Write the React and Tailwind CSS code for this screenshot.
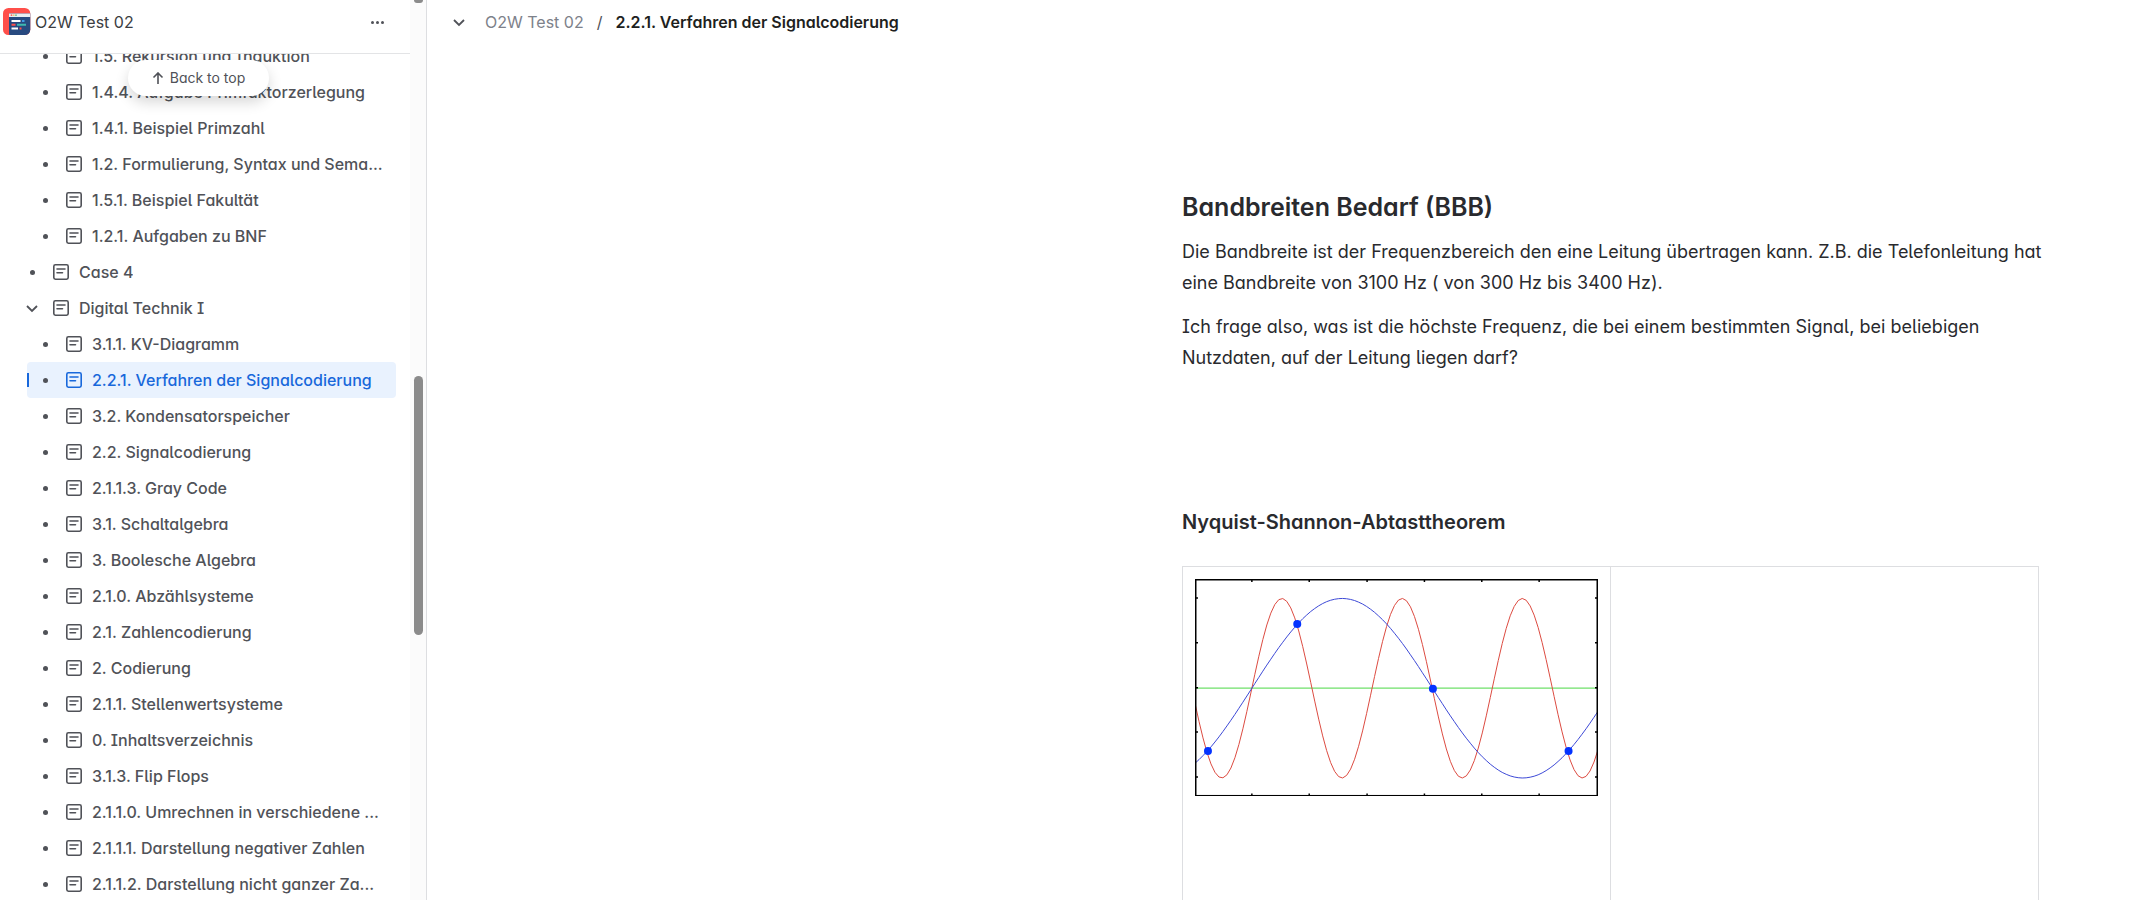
const SPACE_NAME = 'O2W Test 02';

const items = [
  { label: '1.5. Rekursion und Induktion', level: 2 },
  { label: '1.4.4. Aufgabe Primfaktorzerlegung', level: 2 },
  { label: '1.4.1. Beispiel Primzahl', level: 2 },
  { label: '1.2. Formulierung, Syntax und Sema...', level: 2 },
  { label: '1.5.1. Beispiel Fakultät', level: 2 },
  { label: '1.2.1. Aufgaben zu BNF', level: 2 },
  { label: 'Case 4', level: 1 },
  { label: 'Digital Technik I', level: 1, open: true },
  { label: '3.1.1. KV-Diagramm', level: 2 },
  { label: '2.2.1. Verfahren der Signalcodierung', level: 2, active: true },
  { label: '3.2. Kondensatorspeicher', level: 2 },
  { label: '2.2. Signalcodierung', level: 2 },
  { label: '2.1.1.3. Gray Code', level: 2 },
  { label: '3.1. Schaltalgebra', level: 2 },
  { label: '3. Boolesche Algebra', level: 2 },
  { label: '2.1.0. Abzählsysteme', level: 2 },
  { label: '2.1. Zahlencodierung', level: 2 },
  { label: '2. Codierung', level: 2 },
  { label: '2.1.1. Stellenwertsysteme', level: 2 },
  { label: '0. Inhaltsverzeichnis', level: 2 },
  { label: '3.1.3. Flip Flops', level: 2 },
  { label: '2.1.1.0. Umrechnen in verschiedene ...', level: 2 },
  { label: '2.1.1.1. Darstellung negativer Zahlen', level: 2 },
  { label: '2.1.1.2. Darstellung nicht ganzer Za...', level: 2 },
];

function Logo() {
  return (
    <svg viewBox="0 0 28 28" className="size-7 shrink-0" aria-hidden="true">
      <defs>
        <clipPath id="logo-shape">
          <rect width="27.3" height="27" rx="5.5" />
        </clipPath>
      </defs>
      <g clipPath="url(#logo-shape)">
        <rect width="28" height="28" fill="#ff4f4a" />
        <path d="M6 5.500h22V28H9a3 3 0 0 1-3-3z" fill="#284a80" />
        <rect x="6" y="5.5" width="22" height="3.5" fill="#e8edf2" />
        <circle cx="8.5" cy="7.2" r="0.9" fill="#ff5f57" />
        <circle cx="10.8" cy="7.200" r="0.9" fill="#f0c878" />
        <circle cx="13" cy="7.2" r="0.9" fill="#6cc08f" />
        <path d="M8.500 13h9M8.500 20.500h6.500" stroke="#fff" strokeWidth="2" />
        <path d="M19 13h2.500" stroke="#3f9be8" strokeWidth="2" />
        <path d="M8.500 16.700h4M16.500 20.500h2" stroke="#ff4f4a" strokeWidth="2" />
        <path d="M14 16.700h9" stroke="#3fb8af" strokeWidth="2" />
      </g>
    </svg>
  );
}

function DocIcon() {
  return (
    <svg viewBox="0 0 16 16" className="size-4 shrink-0" fill="none" stroke="currentColor" aria-hidden="true">
      <rect x="0.8" y="0.8" width="14.4" height="14.4" rx="1.6" strokeWidth="1.6" />
      <path d="M4 5h8M4 8.800h5.500" strokeWidth="1.6" strokeLinecap="round" />
    </svg>
  );
}

function Chevron() {
  return (
    <svg viewBox="0 0 12 12" className="size-3 shrink-0" fill="none" stroke="currentColor" strokeWidth="1.8" aria-hidden="true">
      <path d="M1 4l5 5 5-5" />
    </svg>
  );
}

function TreeItem({ label, level, open, active }) {
  return (
    <li>
      <a
        href="#"
        aria-current={active ? 'page' : undefined}
        className={`relative ml-[27px] mr-[14px] flex h-9 items-center rounded pr-2 ${
          level === 2 ? 'pl-[13px]' : 'pl-0'
        } ${active ? 'bg-[#e9f2fe] text-[#1868db]' : 'text-[#505258]'}`}
      >
        {active && <span className="absolute left-0 top-[11px] h-[14px] w-0.5 bg-[#1868db]" />}
        <span className="mr-4 flex w-[10px] shrink-0 justify-center text-[#505258]">
          {open ? <Chevron /> : <span className="size-[5px] rounded-full bg-[#505258]" />}
        </span>
        <DocIcon />
        <span className="ml-[10px] truncate">{label}</span>
      </a>
    </li>
  );
}

function Sidebar() {
  return (
    <aside className="flex w-[427px] shrink-0 border-r border-[#dddee1] text-base font-[450]">
      <div className="relative flex min-w-0 flex-1 flex-col">
        <header className="flex h-[54px] shrink-0 items-start border-b border-[#e3e4e6] pl-[3px] pr-[26px] pt-2">
          <Logo />
          <span className="ml-1 flex-1 font-normal leading-7 text-[#3b3d42]">{SPACE_NAME}</span>
          <button type="button" aria-label="More" className="flex h-7 items-center gap-0.5 text-[#505258]">
            <span className="size-[3px] rounded-full bg-current" />
            <span className="size-[3px] rounded-full bg-current" />
            <span className="size-[3px] rounded-full bg-current" />
          </button>
        </header>
        <nav className="min-h-0 flex-1 overflow-hidden">
          <ul className="-mt-4">
            {items.map((item) => (
              <TreeItem key={item.label} {...item} />
            ))}
          </ul>
        </nav>
        <button
          type="button"
          className="absolute left-32 top-[60px] flex h-9 w-[141px] items-center justify-center gap-1.5 rounded-full bg-white text-sm font-normal text-[#505258] shadow-[0_6px_14px_rgba(0,0,0,0.16)]"
        >
          <svg viewBox="0 0 12 12" className="size-3" fill="none" stroke="currentColor" strokeWidth="1.6" aria-hidden="true">
            <path d="M6 12V1M1.500 5.500L6 1l4.500 4.500" />
          </svg>
          Back to top
        </button>
      </div>
      <div className="flex w-4 flex-col items-center bg-[#fbfbfb]">
        <div className="h-[3px] w-[9px] rounded-b-sm bg-[#8b8b8b]" />
        <div className="mt-[373px] h-[259px] w-[9px] rounded-full bg-[#8b8b8b]" />
      </div>
    </aside>
  );
}

const PLOT_W = 404;
const PLOT_H = 218;
const MID = 109.5;
const AMP = 90;

// samples a sine that crosses the middle line upwards at x = 57
function wave(period) {
  const points = [];
  for (let x = 0; x <= PLOT_W; x += 4) {
    const y = MID - AMP * Math.sin((2 * Math.PI * (x - 57)) / period);
    points.push(`${x},${y.toFixed(1)}`);
  }
  return points.join(' ');
}

const xTicks = [57, 114.5, 172.5, 230, 287.5, 345];
const yTicks = [19, 64, 109, 153.5, 198.5];
const samples = [
  [13, 172.5],
  [102.5, 45],
  [238.5, 110],
  [374.5, 172.5],
];

function SamplingChart() {
  return (
    <svg viewBox="0 0 404 218" className="w-full" role="img" aria-label="Nyquist-Shannon-Abtasttheorem">
      <path d={`M0 ${MID}H${PLOT_W}`} stroke="#6fe06a" strokeWidth="1.3" />
      <polyline points={wave(120.5)} fill="none" stroke="#dc4a40" />
      <polyline points={wave(362)} fill="none" stroke="#3c48d6" />
      <rect x="0.75" y="0.75" width="402.5" height="216.5" fill="none" stroke="#000" strokeWidth="1.5" />
      {xTicks.map((x) => (
        <path key={x} d={`M${x} 0v3M${x} ${PLOT_H}v-3`} stroke="#000" strokeWidth="1.5" />
      ))}
      {yTicks.map((y) => (
        <path key={y} d={`M0 ${y}h3M${PLOT_W} ${y}h-3`} stroke="#000" strokeWidth="1.5" />
      ))}
      {samples.map(([x, y]) => (
        <circle key={x} cx={x} cy={y} r="4" fill="#0433ff" />
      ))}
    </svg>
  );
}

export default function App() {
  return (
    <div className='flex h-screen overflow-hidden bg-white font-["Inter",sans-serif] text-[#292a2e] [font-feature-settings:"cv05","cv08","cv11"]'>
      <Sidebar />
      <main className="min-w-0 flex-1">
        <nav aria-label="Breadcrumb" className="flex h-11 items-center pl-[26px] text-base">
          <button type="button" aria-label="Expand" className="mr-5 text-[#505258]">
            <Chevron />
          </button>
          <a href="#" className="text-[#7d818a]">{SPACE_NAME}</a>
          <span className="mx-[13px] text-[#505258]">/</span>
          <span className="font-semibold text-[#1e1f21]">2.2.1. Verfahren der Signalcodierung</span>
        </nav>
        <article className="ml-auto mr-24 w-[857px] pt-[143px]">
          <h2 className="text-[25px] font-semibold leading-10">Bandbreiten Bedarf (BBB)</h2>
          <p className="-mr-3 mt-[9px] text-lg leading-[31px]">
            Die Bandbreite ist der Frequenzbereich den eine Leitung übertragen kann. Z.B. die Telefonleitung hat eine
            Bandbreite von 3100 Hz ( von 300 Hz bis 3400 Hz).
          </p>
          <p className="-mr-3 mt-[13px] text-lg leading-[31px]">
            Ich frage also, was ist die höchste Frequenz, die bei einem bestimmten Signal, bei beliebigen Nutzdaten, auf
            der Leitung liegen darf?
          </p>
          <h3 className="mt-[133px] text-xl font-semibold leading-8">Nyquist-Shannon-Abtasttheorem</h3>
          <table className="mt-7 h-[400px] w-full table-fixed border-collapse">
            <tbody>
              <tr>
                <td className="border border-[#dddee1] p-3 align-top">
                  <SamplingChart />
                </td>
                <td className="border border-[#dddee1]" />
              </tr>
            </tbody>
          </table>
        </article>
      </main>
    </div>
  );
}
